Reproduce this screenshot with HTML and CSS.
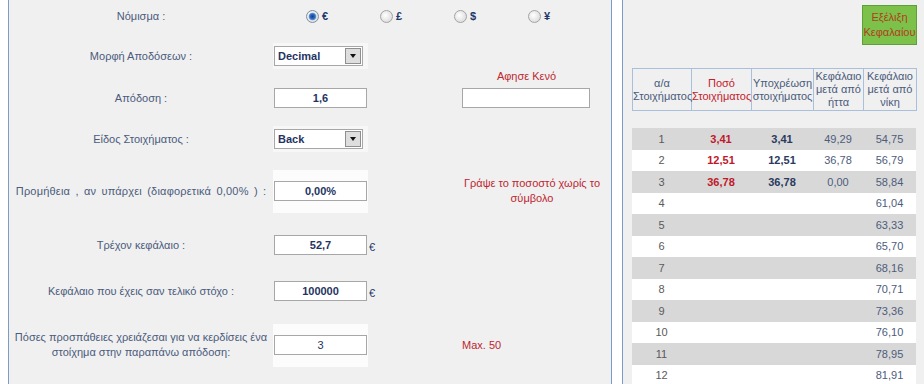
FILE: index.html
```html
<!DOCTYPE html>
<html lang="el">
<head>
    <meta charset="UTF-8">
    <title>Εξέλιξη Κεφαλαίου</title>
    <link rel="stylesheet" href="styles.css">
</head>
<body>
<div class="page">
    <div class="form-panel">
        <!-- νόμισμα -->
        <div class="label r1">Νόμισμα :</div>
        <div class="currencies r1">
            <label class="cur"><input type="radio" name="cur" class="radio" checked><span>€</span></label>
            <label class="cur"><input type="radio" name="cur" class="radio"><span>£</span></label>
            <label class="cur"><input type="radio" name="cur" class="radio"><span>$</span></label>
            <label class="cur"><input type="radio" name="cur" class="radio"><span>¥</span></label>
        </div>

        <div class="label r2">Μορφή Αποδόσεων :</div>
        <div class="ctrl soft r2">
            <div class="select"><span class="value">Decimal</span><span class="arrow"><i></i></span></div>
        </div>
        <div class="note-block">
            <div class="note">Αφησε Κενό</div>
            <input type="text" class="box wide">
        </div>

        <div class="label r3">Απόδοση :</div>
        <div class="ctrl r3"><input type="text" class="box" value="1,6"></div>

        <div class="label r4">Είδος Στοιχήματος :</div>
        <div class="ctrl soft r4">
            <div class="select"><span class="value">Back</span><span class="arrow"><i></i></span></div>
        </div>

        <div class="label wide-words r5">Προμήθεια , αν υπάρχει (διαφορετικά 0,00% ) :</div>
        <div class="ctrl tall r5"><input type="text" class="box" value="0,00%"></div>
        <div class="note r5 center">Γράψε το ποσοστό χωρίς το<br>σύμβολο</div>

        <div class="label r6">Τρέχον κεφάλαιο :</div>
        <div class="ctrl r6"><input type="text" class="box" value="52,7"></div>
        <div class="euro r6">€</div>

        <div class="label r7">Κεφάλαιο που έχεις σαν τελικό στόχο :</div>
        <div class="ctrl r7"><input type="text" class="box" value="100000"></div>
        <div class="euro r7">€</div>

        <div class="label r8">Πόσες προσπάθειες χρειάζεσαι για να κερδίσεις ένα<br>στοίχημα στην παραπάνω απόδοση:</div>
        <div class="ctrl tall r8"><input type="text" class="box plain" value="3"></div>
        <div class="note r8">Max. 50</div>
    </div>

    <div class="result-panel">
        <div class="btn-green">Εξέλιξη<br>Κεφαλαίου</div>

        <table class="head-table">
            <colgroup><col class="c1"><col class="c2"><col class="c3"><col class="c4"><col class="c5"></colgroup>
            <tr>
                <td>α/α<br>Στοιχήματος</td>
                <td class="red">Ποσό<br>Στοιχήματος</td>
                <td>Υποχρέωση<br>στοιχήματος</td>
                <td>Κεφάλαιο<br>μετά από<br>ήττα</td>
                <td>Κεφάλαιο<br>μετά από<br>νίκη</td>
            </tr>
        </table>

        <table class="data-table">
            <colgroup><col class="c1"><col class="c2"><col class="c3"><col class="c4"><col class="c5"></colgroup>
            <tr><td class="n">1</td><td class="amt">3,41</td><td class="lia">3,41</td><td>49,29</td><td>54,75</td></tr>
            <tr><td class="n">2</td><td class="amt">12,51</td><td class="lia">12,51</td><td>36,78</td><td>56,79</td></tr>
            <tr><td class="n">3</td><td class="amt">36,78</td><td class="lia">36,78</td><td>0,00</td><td>58,84</td></tr>
            <tr><td class="n">4</td><td></td><td></td><td></td><td>61,04</td></tr>
            <tr><td class="n">5</td><td></td><td></td><td></td><td>63,33</td></tr>
            <tr><td class="n">6</td><td></td><td></td><td></td><td>65,70</td></tr>
            <tr><td class="n">7</td><td></td><td></td><td></td><td>68,16</td></tr>
            <tr><td class="n">8</td><td></td><td></td><td></td><td>70,71</td></tr>
            <tr><td class="n">9</td><td></td><td></td><td></td><td>73,36</td></tr>
            <tr><td class="n">10</td><td></td><td></td><td></td><td>76,10</td></tr>
            <tr><td class="n">11</td><td></td><td></td><td></td><td>78,95</td></tr>
            <tr><td class="n">12</td><td></td><td></td><td></td><td>81,91</td></tr>
        </table>
    </div>
</div>
</body>
</html>
```

FILE: styles.css
```css
*{
    margin: 0;
    padding: 0;
    box-sizing: border-box;
}
html, body{
    height: 100%;
    overflow: hidden;
}
body{
    background-color: #ffffff;
    padding-left: 8px;
    font-family: "Liberation Sans", Arial, sans-serif;
    font-size: 11px;
    color: #4a5b7c;
}
.page{
    display: flex;
    gap: 10px;
    height: 384px;
    overflow: hidden;
}

/* αριστερή φόρμα */
.form-panel{
    width: 604px;
    background-color: #f0f0f0;
    border-left: 1px solid #7a9cc6;
    border-right: 1px solid #7a9cc6;
    display: grid;
    grid-template-columns: 264px 95px 20px 74px 140px;
    grid-template-rows: 32px 48px 36px 46px 58px 50px 42px 66px;
    align-items: center;
}
.r1{ grid-row: 1; }
.r2{ grid-row: 2; }
.r3{ grid-row: 3; }
.r4{ grid-row: 4; }
.r5{ grid-row: 5; }
.r6{ grid-row: 6; }
.r7{ grid-row: 7; }
.r8{ grid-row: 8; }
.label{
    grid-column: 1;
    text-align: center;
    line-height: 15px;
}
.label.wide-words{
    word-spacing: 2px;
    letter-spacing: 0.2px;
}
.currencies{
    grid-column: 2 / 6;
    display: flex;
    padding-left: 33px;
}
.cur{
    width: 78px;
    display: flex;
    align-items: center;
    gap: 3px;
    font-weight: bold;
    color: #22386a;
}
.radio{
    appearance: none;
    -webkit-appearance: none;
    width: 13px;
    height: 13px;
    border-radius: 50%;
    border: 1px solid #a3a3a3;
    background: radial-gradient(circle at 40% 40%, #ffffff, #d2d2d2);
}
.radio:checked{
    border-color: #7f8ea3;
    background: radial-gradient(circle, #123f86 0, #2f6cc4 2.5px, #6f9ad6 3.5px, rgba(255,255,255,0) 4.2px),
                radial-gradient(circle at 40% 40%, #ffffff, #d2d2d2);
}
.ctrl{
    grid-column: 2;
    display: flex;
    align-items: center;
    justify-content: center;
}
.ctrl.soft{
    height: 26px;
    background-color: #f7f7f7;
}
.ctrl.tall{
    height: 43px;
    background-color: #fcfcfc;
}
.box{
    width: 93px;
    height: 20px;
    border: 1px solid #a7a7a7;
    background-color: #ffffff;
    text-align: center;
    font-family: inherit;
    font-size: 11px;
    font-weight: bold;
    color: #1f3463;
    outline: none;
}
.box.plain{
    font-weight: normal;
}
.box.wide{
    width: 128px;
}
.select{
    width: 89px;
    height: 20px;
    border: 1px solid #a7a7a7;
    background-color: #ffffff;
    display: flex;
    align-items: center;
    margin-right: 4px;
}
.select .value{
    flex: 1;
    padding-left: 3px;
    font-weight: bold;
    color: #1f3463;
}
.select .arrow{
    width: 16px;
    height: 16px;
    margin-right: 1px;
    border: 1px solid #8f8f8f;
    background-color: #dedede;
    display: flex;
    align-items: center;
    justify-content: center;
}
.select .arrow i{
    width: 0;
    height: 0;
    border-left: 3.5px solid transparent;
    border-right: 3.5px solid transparent;
    border-top: 4px solid #111111;
}
.euro{
    grid-column: 3;
    padding-left: 1px;
    padding-top: 4px;
    color: #22386a;
}
.note{
    grid-column: 5;
    color: #bd2630;
    line-height: 15px;
}
.note.center{
    text-align: center;
}
.note-block{
    grid-column: 5;
    grid-row: 2 / 4;
    align-self: stretch;
    display: flex;
    flex-direction: column;
    justify-content: flex-end;
    padding-bottom: 8px;
    width: 129px;
}
.note-block .note{
    text-align: center;
    margin-bottom: 4px;
}

/* δεξιά αποτελέσματα */
.result-panel{
    flex: 1;
    background-color: #f0f0f0;
    border-left: 1px solid #7a9cc6;
    padding: 5px 8px 0 9px;
    display: flex;
    flex-direction: column;
    overflow: hidden;
}
.btn-green{
    align-self: flex-end;
    width: 55px;
    height: 40px;
    margin-right: -1px;
    background-color: #7cc24a;
    border: 1px solid #5f9f38;
    color: #b33c1e;
    text-align: center;
    line-height: 15px;
    padding-top: 4px;
    flex-shrink: 0;
}
table{
    width: 284px;
    border-collapse: collapse;
    table-layout: fixed;
    flex-shrink: 0;
}
.c1{ width: 59px; }
.c2{ width: 60px; }
.c3{ width: 62px; }
.c4{ width: 50px; }
.c5{ width: 53px; }
.head-table{
    margin-top: 23px;
    border: 1px solid #a9c0dc;
}
.head-table td{
    border: 1px solid #a9c0dc;
    text-align: center;
    line-height: 13px;
    padding: 1px 0;
    white-space: nowrap;
    color: #4a5b7c;
}
.head-table td.red{
    color: #c4202c;
}
.data-table{
    margin-top: 17px;
}
.data-table tr{
    height: 21.5px;
    background-color: #ffffff;
}
.data-table tr:nth-child(odd){
    background-color: #d8d8d8;
}
.data-table td{
    text-align: center;
    color: #4d5c7c;
    padding: 0;
}
.data-table td.n{
    color: #5a5a5a;
}
.data-table td.amt{
    color: #c0182a;
    font-weight: bold;
}
.data-table td.lia{
    color: #2b3a60;
    font-weight: bold;
}
```
